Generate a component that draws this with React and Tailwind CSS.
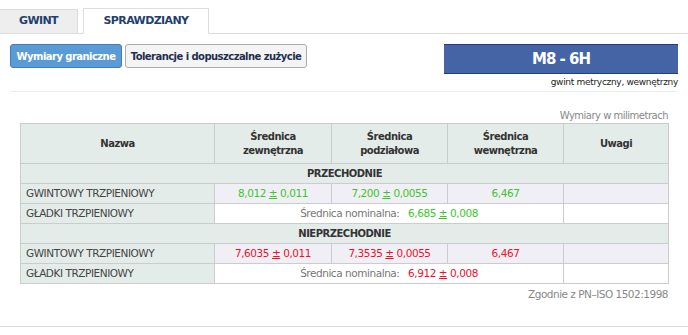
const font = { fontFamily: '"DejaVu Sans", Verdana, sans-serif' };

function Pm({ a, b }) {
  return (
    <>
      {a} <span className="underline">±</span> {b}
    </>
  );
}

function GroupRow({ label }) {
  return (
    <tr className="h-5 bg-[#e4ecea]">
      <td colSpan={5} className="border border-[#ccc] text-center font-bold text-[10px] tracking-[-0.5px] text-[#333]">
        {label}
      </td>
    </tr>
  );
}

function DataRows({ color, ext, pitch, inner, nominal }) {
  return (
    <>
      <tr className="h-5">
        <td className="border border-[#ccc] bg-[#e4ecea] pl-[5px] text-[#444]">GWINTOWY TRZPIENIOWY</td>
        <td className={`border border-[#ccc] bg-[#f0eff5] text-center ${color}`}>{ext}</td>
        <td className={`border border-[#ccc] bg-[#f0eff5] text-center ${color}`}>{pitch}</td>
        <td className={`border border-[#ccc] bg-[#f0eff5] text-center ${color}`}>{inner}</td>
        <td className="border border-[#ccc] bg-[#f0eff5]"></td>
      </tr>
      <tr className="h-5">
        <td className="border border-[#ccc] bg-[#e4ecea] pl-[5px] text-[#444]">GŁADKI TRZPIENIOWY</td>
        <td colSpan={3} className="border border-[#ccc] bg-white text-center text-[#777]">
          Średnica nominalna:&nbsp;&nbsp; <span className={color}>{nominal}</span>
        </td>
        <td className="border border-[#ccc] bg-white"></td>
      </tr>
    </>
  );
}

export default function App() {
  return (
    <div className="w-[688px] h-[335px] bg-white text-[10.5px] tracking-[-0.45px] overflow-hidden" style={font}>
      {/* tabs */}
      <div className="flex items-end pt-2 border-b border-[#ddd]">
        <div className="w-[78px] h-[25px] -mb-px flex items-center justify-center bg-[#eee] border border-[#ddd] border-l-0 font-bold text-[11px] tracking-[-0.6px] text-[#1f3f70]">
          GWINT
        </div>
        <div className="ml-[5px] w-[126px] h-[26px] -mb-px flex items-center justify-center bg-white border border-[#ddd] border-b-white font-bold text-[11px] tracking-[-0.6px] text-[#1f3f70]">
          SPRAWDZIANY
        </div>
      </div>

      <div className="px-[10px]">
        {/* buttons + title */}
        <div className="flex justify-between pt-[10px]">
          <div className="flex gap-[3px] h-[24px]">
            <div className="w-[112px] flex items-center justify-center rounded-[3px] bg-[#5b9bd5] border border-[#3d7fbf] text-white font-bold text-[10px] tracking-[-0.55px]">
              Wymiary graniczne
            </div>
            <div className="w-[182px] flex items-center justify-center rounded-[3px] bg-[#f4f4f4] border border-[#aaa] text-[#1f3050] font-bold text-[10px] tracking-[-0.55px] whitespace-nowrap">
              Tolerancje i dopuszczalne zużycie
            </div>
          </div>
          <div className="w-[234px] flex flex-col items-end">
            <div className="w-full h-[30px] flex items-center justify-center bg-[#4464a6] border-y border-[#1f3f80] text-white font-bold text-[15px] tracking-[-1px]">
              M8 - 6H
            </div>
            <div className="mt-[2px] text-[9px] tracking-[-0.3px] text-[#222] leading-[12px]">gwint metryczny, wewnętrzny</div>
          </div>
        </div>
        <div className="mt-[3px] border-b border-[#e6eef2]"></div>

        <div className="px-[10px]">
          <div className="mt-[17px] text-right text-[10px] tracking-[-0.5px] text-[#888] leading-[14px]">Wymiary w milimetrach</div>
          <table className="w-[648px] border-collapse table-fixed">
            <colgroup>
              <col className="w-[194px]" />
              <col className="w-[117px]" />
              <col className="w-[116px]" />
              <col className="w-[116px]" />
              <col className="w-[105px]" />
            </colgroup>
            <thead>
              <tr className="h-[40px] bg-[#e4ecea] text-[#333] text-[10px] tracking-[-0.5px]">
                <th className="border border-[#ccc] font-bold">Nazwa</th>
                <th className="border border-[#ccc] font-bold leading-[14px]">Średnica<br />zewnętrzna</th>
                <th className="border border-[#ccc] font-bold leading-[14px]">Średnica<br />podziałowa</th>
                <th className="border border-[#ccc] font-bold leading-[14px]">Średnica<br />wewnętrzna</th>
                <th className="border border-[#ccc] font-bold">Uwagi</th>
              </tr>
            </thead>
            <tbody>
              <GroupRow label="PRZECHODNIE" />
              <DataRows
                color="text-[#3cc62a]"
                ext={<Pm a="8,012" b="0,011" />}
                pitch={<Pm a="7,200" b="0,0055" />}
                inner="6,467"
                nominal={<Pm a="6,685" b="0,008" />}
              />
              <GroupRow label="NIEPRZECHODNIE" />
              <DataRows
                color="text-[#f0102a]"
                ext={<Pm a="7,6035" b="0,011" />}
                pitch={<Pm a="7,3535" b="0,0055" />}
                inner="6,467"
                nominal={<Pm a="6,912" b="0,008" />}
              />
            </tbody>
          </table>
          <div className="mt-[3px] text-right text-[10.5px] tracking-[-0.5px] text-[#888] leading-[14px]">Zgodnie z PN–ISO 1502:1998</div>
        </div>
      </div>
      <div className="mt-[25px] border-b border-[#ddd]"></div>
    </div>
  );
}
